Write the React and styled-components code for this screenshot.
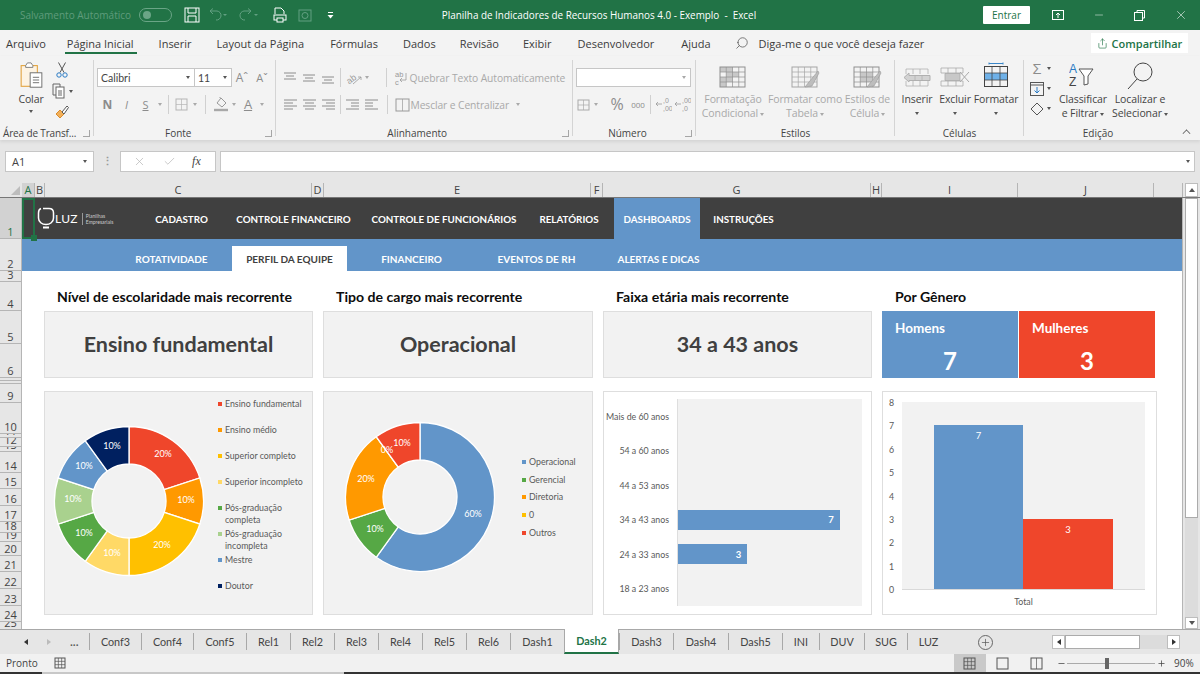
import React from 'react';
import styled, { createGlobalStyle } from 'styled-components';
import { Search, Minus, X, Check, Share, Plus } from 'lucide-react';

const BLUE = '#6295c9';
const RED = '#ef462b';
const UI = '"Open Sans", "Noto Sans", sans-serif';
const SHEET = 'Lato, "Open Sans", sans-serif';

const GlobalStyle = createGlobalStyle`
	html, body {
		margin: 0;
		padding: 0;
		width: 1200px;
		height: 674px;
		overflow: hidden;
		background: #e6e6e6;
		font-family: ${UI};
	}
	* { box-sizing: border-box; }
`;

const Window = styled.div`
	width: 1200px;
	height: 674px;
	display: flex;
	flex-direction: column;
	overflow: hidden;
`;

/* ---------- title bar ---------- */
const TitleBar = styled.div`
	height: 30px;
	background: #217346;
	display: flex;
	align-items: center;
	color: #fff;
	padding-left: 20px;
	flex: none;
	& > * {
		flex: none;
	}
`;
const AutoSave = styled.span`
	width: 119px;
	font-size: 10px;
	color: #5f9c7c;
	white-space: nowrap;
`;
const Toggle = styled.span`
	width: 33px;
	height: 14px;
	border: 1px solid #6aa586;
	border-radius: 7px;
	display: flex;
	align-items: center;
	padding-left: 3px;
	&::before {
		content: '';
		width: 8px;
		height: 8px;
		border-radius: 50%;
		background: #6aa586;
	}
`;
const QuickBar = styled.div`
	width: 269px;
	display: flex;
	align-items: center;
	padding-left: 8px;
`;
const QuickSlot = styled.span`
	width: ${(p) => p.$w}px;
	display: flex;
	justify-content: center;
	flex: none;
`;
const DocTitle = styled.div`
	width: 316px;
	text-align: center;
	font-size: 9.9px;
	white-space: pre;
`;
const WinControls = styled.div`
	display: flex;
	align-items: center;
	margin-left: 226px;
`;
const Entrar = styled.span`
	width: 47px;
	height: 18px;
	background: #fff;
	color: #217346;
	font-size: 10px;
	border-radius: 1px;
	display: flex;
	align-items: center;
	justify-content: center;
	margin-right: 7px;
`;
const WinBtn = styled.span`
	width: 41px;
	display: flex;
	justify-content: center;
`;

/* ---------- menu tabs ---------- */
const MenuBar = styled.div`
	height: 26px;
	background: #f3f3f3;
	display: flex;
	align-items: center;
	padding-left: 6px;
	flex: none;
	position: relative;
`;
const MenuItem = styled.span`
	margin-right: ${(p) => p.$gap}px;
	font-size: 11px;
	color: #3b3b3b;
	white-space: nowrap;
	position: relative;
	${(p) =>
		p.$active &&
		`&::after {
			content: '';
			position: absolute;
			left: -2px;
			right: -3px;
			bottom: -3px;
			height: 2px;
			background: #217346;
		}`}
`;
const TellMe = styled.span`
	display: flex;
	align-items: center;
	gap: 10px;
	font-size: 11px;
	color: #3b3b3b;
	margin-left: 24px;
	white-space: nowrap;
`;
const MirrorSearch = styled(Search)`
	transform: scaleX(-1);
`;
const ShareBtn = styled.span`
	position: absolute;
	left: 1091px;
	top: 3px;
	width: 97px;
	height: 20px;
	background: #fff;
	color: #217346;
	font-size: 11px;
	font-weight: 600;
	display: flex;
	align-items: center;
	justify-content: center;
	gap: 4px;
	white-space: nowrap;
`;

/* ---------- ribbon ---------- */
const Ribbon = styled.div`
	height: 84px;
	background: #f3f3f3;
	display: flex;
	flex: none;
	box-shadow: 0 2px 3px #d4d4d4;
	position: relative;
`;
const Group = styled.div`
	width: ${(p) => p.$w}px;
	height: 84px;
	display: flex;
	flex-direction: column;
	flex: none;
	position: relative;
	&::after {
		content: '';
		position: absolute;
		right: 0;
		top: 4px;
		bottom: 4px;
		width: 1px;
		background: ${(p) => (p.$end ? 'transparent' : '#d4d4d4')};
	}
`;
const GroupBody = styled.div`
	height: 68px;
	display: flex;
	flex: none;
	padding-left: ${(p) => p.$pl || 0}px;
`;
const GroupLabel = styled.div`
	height: 14px;
	margin-top: 2px;
	font-size: 10px;
	line-height: 14px;
	flex: none;
	color: #444;
	text-align: ${(p) => (p.$left ? 'left' : 'center')};
	padding-left: ${(p) => p.$pl || 0}px;
	padding-right: ${(p) => p.$pr || 0}px;
	letter-spacing: ${(p) => (p.$left ? '-0.15px' : '0')};
	white-space: nowrap;
`;
const Launcher = styled.span`
	position: absolute;
	right: 4px;
	bottom: 3px;
	width: 7px;
	height: 7px;
	border-right: 1px solid #a6a6a6;
	border-bottom: 1px solid #a6a6a6;
`;
const BigBtn = styled.div`
	width: ${(p) => p.$w}px;
	display: flex;
	flex-direction: column;
	align-items: center;
	padding-top: ${(p) => p.$top ?? 10}px;
	flex: none;
`;
const BigLabel = styled.div`
	margin-top: ${(p) => p.$mt ?? 4}px;
	font-size: 10.5px;
	line-height: 14px;
	text-align: center;
	white-space: pre;
	letter-spacing: -0.1px;
	color: ${(p) => (p.$off ? '#a9a9a9' : '#444')};
`;
const Caret = styled.span`
	display: inline-block;
	width: 0;
	height: 0;
	flex: none;
	border-left: 2.5px solid transparent;
	border-right: 2.5px solid transparent;
	border-top: 3px solid ${(p) => (p.$off ? '#a9a9a9' : '#555')};
	margin-left: ${(p) => p.$ml || 0}px;
	margin-top: ${(p) => p.$mt || 0}px;
	vertical-align: middle;
`;
const SmallCol = styled.div`
	width: ${(p) => p.$w}px;
	display: flex;
	flex-direction: column;
	padding-top: ${(p) => p.$top}px;
	padding-left: ${(p) => p.$pl || 0}px;
	margin-left: ${(p) => p.$ml || 0}px;
	gap: ${(p) => p.$gap}px;
	flex: none;
	align-items: ${(p) => p.$align || 'center'};
`;
const ToolRow = styled.div`
	display: flex;
	align-items: center;
	height: ${(p) => p.$h || 19}px;
	flex: none;
`;
const RowStack = styled.div`
	display: flex;
	flex-direction: column;
	gap: 8px;
	padding-top: 12px;
`;
const SelectBox = styled.div`
	width: ${(p) => p.$w}px;
	height: 19px;
	background: #fff;
	border: 1px solid #c6c6c6;
	margin-left: -1px;
	font-size: 10.5px;
	color: #444;
	display: flex;
	align-items: center;
	justify-content: ${(p) => (p.$end ? 'flex-end' : 'space-between')};
	padding: 0 4px 0 3px;
	font-family: ${SHEET};
`;
const Glyph = styled.span`
	width: ${(p) => p.$w}px;
	text-align: center;
	font-size: ${(p) => p.$size || 11}px;
	font-weight: ${(p) => p.$weight || 400};
	font-style: ${(p) => (p.$italic ? 'italic' : 'normal')};
	text-decoration: ${(p) => (p.$under ? 'underline' : 'none')};
	color: ${(p) => p.$c || '#8c8c8c'};
	margin-left: ${(p) => p.$ml || 0}px;
	flex: none;
	font-family: ${UI};
	line-height: 19px;
`;
const Sep = styled.span`
	width: 1px;
	height: 19px;
	background: #d0d0d0;
	margin-left: ${(p) => p.$l}px;
	margin-right: ${(p) => p.$r}px;
	flex: none;
`;
const Spacer = styled.span`
	width: ${(p) => p.$w}px;
	flex: none;
`;
const OffText = styled.span`
	font-size: 10.3px;
	color: #a9a9a9;
	white-space: nowrap;
	letter-spacing: -0.1px;
	margin-left: ${(p) => p.$ml || 0}px;
`;
const CollapseBtn = styled.span`
	position: absolute;
	left: 1183px;
	top: 74px;
	width: 7px;
	height: 7px;
	border-left: 1.5px solid #555;
	border-top: 1.5px solid #555;
	transform: rotate(45deg) scale(0.8);
`;

/* ---------- formula bar ---------- */
const FormulaBar = styled.div`
	height: 21px;
	margin-top: 11px;
	display: flex;
	flex: none;
	padding-left: 5px;
	padding-right: 5px;
`;
const NameBox = styled.div`
	width: 89px;
	background: #fff;
	border: 1px solid #c6c6c6;
	font-size: 11px;
	color: #444;
	display: flex;
	align-items: center;
	justify-content: space-between;
	padding: 0 6px;
`;
const Dots = styled.span`
	width: 26px;
	text-align: center;
	color: #9a9a9a;
	font-size: 11px;
	font-weight: 700;
	line-height: 19px;
`;
const FxBox = styled.div`
	width: 96px;
	background: #fff;
	border: 1px solid #c6c6c6;
	display: flex;
	align-items: center;
	justify-content: space-around;
	padding: 0 6px 0 4px;
	margin-right: 4px;
	color: #b5b5b5;
`;
const Fx = styled.span`
	font-family: 'Liberation Serif', serif;
	font-style: italic;
	font-size: 12px;
	color: #444;
`;
const FormulaInput = styled.div`
	flex: 1;
	background: #fff;
	border: 1px solid #c6c6c6;
	display: flex;
	align-items: center;
	justify-content: flex-end;
	padding-right: 4px;
`;

/* ---------- columns + sheet ---------- */
const ColumnBar = styled.div`
	height: 14px;
	margin-top: 11px;
	display: flex;
	flex: none;
`;
const Corner = styled.div`
	width: 22px;
	display: flex;
	justify-content: flex-end;
	align-items: flex-end;
	padding: 0 2px 2px 0;
	&::after {
		content: '';
		border-left: 9px solid transparent;
		border-bottom: 9px solid #bdbdbd;
	}
`;
const ColHead = styled.div`
	width: ${(p) => p.$w}px;
	flex: none;
	font-size: 11px;
	line-height: 14px;
	text-align: center;
	color: ${(p) => (p.$sel ? '#217346' : '#444')};
	background: ${(p) => (p.$sel ? '#d2d2d2' : 'transparent')};
	border-right: 1px solid #b5b5b5;
`;
const ScrollBtn = styled.div`
	width: 13px;
	height: ${(p) => p.$h}px;
	margin-left: ${(p) => p.$ml || 0}px;
	margin-top: ${(p) => p.$mt || 0}px;
	background: #fff;
	border: 1px solid #bdbdbd;
	display: flex;
	align-items: center;
	justify-content: center;
	flex: none;
`;
const VArrow = styled.span`
	width: 0;
	height: 0;
	border-left: 3.5px solid transparent;
	border-right: 3.5px solid transparent;
	${(p) => (p.$down ? 'border-top' : 'border-bottom')}: 4px solid #555;
`;
const SheetArea = styled.div`
	height: 432px;
	display: flex;
	flex: none;
	border-top: 1px solid #777;
	position: relative;
`;
const RowBar = styled.div`
	width: 22px;
	flex: none;
	display: flex;
	flex-direction: column;
	border-right: 1px solid #b5b5b5;
	overflow: hidden;
`;
const RowHead = styled.div`
	height: ${(p) => p.$h}px;
	flex: none;
	overflow: hidden;
	border-bottom: 1px solid #b5b5b5;
	display: flex;
	align-items: flex-end;
	justify-content: center;
	font-size: 11px;
	line-height: 13px;
	color: ${(p) => (p.$sel ? '#217346' : '#444')};
	background: ${(p) => (p.$sel ? '#d2d2d2' : 'transparent')};
`;
const CellCursor = styled.div`
	position: absolute;
	left: 22px;
	top: 0;
	width: 13px;
	height: 41px;
	border: 2px solid #217346;
	&::after {
		content: '';
		position: absolute;
		right: -4px;
		bottom: -4px;
		width: 6px;
		height: 6px;
		background: #217346;
	}
`;
const Sheet = styled.div`
	width: 1160px;
	flex: none;
	background: #fff;
	display: flex;
	flex-direction: column;
	font-family: ${SHEET};
`;

/* ---------- dashboard nav ---------- */
const MainNav = styled.div`
	height: 41px;
	background: #404040;
	display: flex;
	align-items: stretch;
	padding-left: 15px;
	flex: none;
`;
const Logo = styled.div`
	display: flex;
	align-items: center;
	width: 103px;
	color: #fff;
`;
const LogoWord = styled.span`
	font-size: 12px;
	margin: 0 4px 0 0;
	letter-spacing: 0.3px;
`;
const LogoSub = styled.span`
	border-left: 1px solid #999;
	padding-left: 3px;
	font-size: 5px;
	line-height: 6px;
	color: #ccc;
`;
const NavItem = styled.div`
	display: flex;
	align-items: center;
	justify-content: center;
	width: ${(p) => p.$w}px;
	color: #fff;
	font-size: 9.8px;
	font-weight: 700;
	white-space: nowrap;
	background: ${(p) => (p.$active ? BLUE : 'transparent')};
`;
const SubNav = styled.div`
	height: 32px;
	background: ${BLUE};
	display: flex;
	align-items: flex-end;
	padding-left: 89px;
	flex: none;
`;
const SubItem = styled.div`
	height: 25px;
	width: ${(p) => p.$w}px;
	display: flex;
	align-items: center;
	justify-content: center;
	font-size: 10px;
	font-weight: 700;
	white-space: nowrap;
	background: ${(p) => (p.$active ? '#fff' : 'transparent')};
	color: ${(p) => (p.$active ? '#404040' : '#fff')};
`;

/* ---------- dashboard ---------- */
const Board = styled.div`
	display: grid;
	grid-template-columns: 269px 270px 269px 274px;
	grid-template-rows: 28px 67px 224px;
	column-gap: 10px;
	row-gap: 0;
	padding: 12px 0 0 22px;
`;
const Heading = styled.div`
	font-size: 14.1px;
	font-weight: 700;
	color: #0d0d0d;
	padding: 6px 0 0 13px;
	line-height: 16px;
	white-space: nowrap;
`;
const Kpi = styled.div`
	background: #f2f2f2;
	border: 1px solid #dedede;
	display: flex;
	align-items: center;
	justify-content: center;
	padding-bottom: 1px;
	font-size: 21.5px;
	font-weight: 700;
	color: #404040;
`;
const GenderRow = styled.div`
	display: flex;
	gap: 1px;
	width: 273px;
`;
const GenderCard = styled.div`
	flex: 1;
	background: ${(p) => p.$bg};
	color: #fff;
	font-weight: 700;
	display: flex;
	flex-direction: column;
	padding: 9px 0 0 13px;
`;
const GenderLabel = styled.div`
	font-size: 13.5px;
	line-height: 16px;
`;
const GenderValue = styled.div`
	font-size: 24px;
	line-height: 28px;
	text-align: center;
	margin: 11px 13px 0 0;
`;
const Card = styled.div`
	margin-top: 13px;
	height: 224px;
	width: ${(p) => (p.$w ? `${p.$w}px` : 'auto')};
	border: 1px solid #dedede;
	background: ${(p) => (p.$white ? '#fff' : '#f2f2f2')};
	display: flex;
	font-size: 8.8px;
	color: #595959;
`;
const DonutSvg = styled.svg`
	flex: none;
	display: block;
`;
const Legend = styled.div`
	display: grid;
	grid-auto-rows: ${(p) => p.$row}px;
	margin-top: ${(p) => p.$top}px;
	align-items: center;
`;
const LegendItem = styled.div`
	display: flex;
	align-items: ${(p) => (p.$wrap ? 'flex-start' : 'center')};
	align-self: ${(p) => (p.$wrap ? 'start' : 'center')};
	margin-top: ${(p) => (p.$wrap ? 7 : 0)}px;
	gap: 3px;
	line-height: 12px;
	font-size: 8.8px;
	white-space: pre;
`;
const Swatch = styled.span`
	width: 4px;
	height: 4px;
	flex: none;
	background: ${(p) => p.$c};
	margin-top: ${(p) => (p.$wrap ? 4 : 0)}px;
`;
const AgeLabels = styled.div`
	width: 65px;
	margin-top: 7px;
	display: grid;
	grid-template-rows: repeat(6, 34.5px);
	align-items: center;
	text-align: right;
	white-space: nowrap;
	flex: none;
`;
const AgePlot = styled.div`
	width: 185px;
	height: 207px;
	margin: 7px 0 0 8px;
	background: #f2f2f2;
	border-left: 1px solid #dedede;
	display: grid;
	grid-template-rows: repeat(6, 34.5px);
	align-items: center;
`;
const AgeBar = styled.div`
	width: ${(p) => p.$w}px;
	height: 20px;
	background: ${BLUE};
	color: #fff;
	font-size: 9.5px;
	font-weight: 700;
	display: flex;
	align-items: center;
	justify-content: flex-end;
	padding-right: 6px;
`;
const AxisCol = styled.div`
	width: 19px;
	height: 199px;
	margin-top: 5px;
	display: flex;
	flex-direction: column;
	justify-content: space-between;
	align-items: flex-end;
	padding-right: 8px;
	line-height: 12px;
	flex: none;
`;
const GenderPlotWrap = styled.div`
	width: 243px;
	display: flex;
	flex-direction: column;
	flex: none;
`;
const GenderPlot = styled.div`
	height: 188px;
	margin-top: 10px;
	background: #f2f2f2;
	border-bottom: 1px solid #d9d9d9;
	display: flex;
	align-items: flex-end;
	padding-left: 32px;
`;
const GenderBar = styled.div`
	width: ${(p) => p.$w}px;
	height: ${(p) => p.$h}px;
	background: ${(p) => p.$bg};
	color: #fff;
	text-align: center;
	font-size: 9.5px;
	padding-top: 5px;
	line-height: 12px;
`;
const AxisName = styled.div`
	text-align: center;
	margin-top: 6px;
	line-height: 12px;
`;

/* ---------- scrollbars + tabs + status ---------- */
const VScroll = styled.div`
	width: 18px;
	flex: none;
	border-left: 1px solid #b5b5b5;
	padding-left: 2px;
	display: flex;
	flex-direction: column;
`;
const VTrack = styled.div`
	width: 13px;
	height: 419px;
	background: #dcdcdc;
	flex: none;
`;
const VThumb = styled.div`
	height: 320px;
	background: #fff;
	border: 1px solid #ababab;
`;
const TabBar = styled.div`
	height: 25px;
	background: #e6e6e6;
	display: flex;
	align-items: center;
	border-top: 1px solid #a8a8a8;
	flex: none;
	position: relative;
`;
const TabNav = styled.div`
	width: 89px;
	display: flex;
	align-items: center;
	flex: none;
	height: 100%;
	padding-left: 24px;
	gap: 19px;
	color: #555;
	font-size: 10px;
`;
const Arrow = styled.span`
	width: 0;
	height: 0;
	border-top: 3.5px solid transparent;
	border-bottom: 3.5px solid transparent;
	${(p) => (p.$right ? 'border-left' : 'border-right')}: 4px solid ${(p) => p.$c || '#333'};
`;
const Tab = styled.div`
	width: ${(p) => p.$w}px;
	height: ${(p) => (p.$active ? '25px' : '17px')};
	margin-top: ${(p) => (p.$active ? '-1px' : '-2px')};
	flex: none;
	display: flex;
	align-items: center;
	justify-content: center;
	font-size: 10.8px;
	font-family: ${SHEET};
	color: ${(p) => (p.$active ? '#217346' : '#444')};
	font-weight: ${(p) => (p.$active ? 700 : 400)};
	background: ${(p) => (p.$active ? '#fff' : 'transparent')};
	border-left: 1px solid #a8a8a8;
	&:last-of-type {
		border-right: 1px solid #a8a8a8;
	}
	${(p) => p.$active && 'border-bottom: 2px solid #217346; border-right: 1px solid #a8a8a8;'}
`;
const AddSheet = styled.span`
	margin-left: 29px;
	width: 15px;
	height: 15px;
	border: 1px solid #666;
	border-radius: 50%;
	display: flex;
	align-items: center;
	justify-content: center;
	color: #555;
	flex: none;
`;
const HScroll = styled.div`
	margin-left: 59px;
	width: 128px;
	height: 14px;
	display: flex;
	background: #dcdcdc;
	flex: none;
`;
const HArrow = styled.span`
	width: 13px;
	background: #fff;
	border: 1px solid #bdbdbd;
	display: flex;
	align-items: center;
	justify-content: center;
	flex: none;
`;
const HThumb = styled.span`
	width: 75px;
	background: #fff;
	border: 1px solid #ababab;
	margin-right: 27px;
	flex: none;
`;
const StatusBar = styled.div`
	height: 18px;
	background: #f1f1f1;
	display: flex;
	align-items: center;
	font-size: 10px;
	color: #444;
	padding-left: 6px;
	flex: none;
`;
const StatusLabel = styled.span`
	width: ${(p) => p.$w}px;
	margin-left: ${(p) => p.$ml || 0}px;
	flex: none;
`;
const ViewBtn = styled.span`
	width: ${(p) => p.$w}px;
	height: 18px;
	display: flex;
	align-items: center;
	justify-content: center;
	background: ${(p) => (p.$active ? '#c9c9c9' : 'transparent')};
	flex: none;
`;
const ZoomMinus = styled(Minus)`
	margin-left: 4px;
	flex: none;
`;
const ZoomTrack = styled.div`
	width: 88px;
	height: 1px;
	background: #aaa;
	margin: 0 2px 0 1px;
	position: relative;
	flex: none;
	&::after {
		content: '';
		position: absolute;
		left: 38px;
		top: -5px;
		width: 4px;
		height: 11px;
		background: #666;
	}
`;
const BottomEdge = styled.div`
	height: 2px;
	flex: none;
	background: linear-gradient(to right, #333 42px, #c8c8c8 42px, #c8c8c8 344px, #333 344px);
`;

/* ---------- small drawn icons ---------- */
const Lines = ({ rows, color = '#8c8c8c' }) => (
	<svg width="15" height="13" viewBox="0 0 15 13">
		{rows.map((r, i) => (
			<line key={i} x1={r[0]} x2={r[1]} y1={r[2]} y2={r[2]} stroke={color} strokeWidth="1" />
		))}
	</svg>
);

const TableIcon = ({ w = 25, h = 20, fill = [], fillColor = '#c8c8c8', stroke = '#8f8f8f', brush, cols = 4, rows = 4 }) => (
	<svg width={w + 4} height={h + 2} viewBox={`0 0 ${w + 4} ${h + 2}`}>
		{fill.map(([c, r], i) => (
			<rect key={i} x={1 + (c * w) / cols} y={1 + (r * h) / rows} width={w / cols} height={h / rows} fill={fillColor} />
		))}
		<rect x="1" y="1" width={w} height={h} fill="none" stroke={stroke} />
		{Array.from({ length: cols - 1 }, (_, i) => (
			<line key={i} x1={1 + ((i + 1) * w) / cols} x2={1 + ((i + 1) * w) / cols} y1="1" y2={h + 1} stroke={stroke} strokeWidth="0.7" />
		))}
		{Array.from({ length: rows - 1 }, (_, i) => (
			<line key={i} y1={1 + ((i + 1) * h) / rows} y2={1 + ((i + 1) * h) / rows} x1="1" x2={w + 1} stroke={stroke} strokeWidth="0.7" />
		))}
		{brush && <path d={`M${w + 2} 5 L${w - 7} ${h - 4} L${w - 11} ${h + 1} L${w - 4} ${h} L${w + 3} 7Z`} fill="#bdbdbd" stroke="#999" strokeWidth="0.6" />}
	</svg>
);

const InsertIcon = () => (
	<svg width="28" height="22" viewBox="0 0 28 22" fill="none" stroke="#b0b0b0">
		<path d="M3 3h22v5M3 3v5M3 15v5h22v-5M10 3v5M17 3v5M10 15v5M17 15v5" strokeWidth="0.8" />
		<path d="M1 11.5l5-4.5v2.5h21v5H6v1.5z" fill="#d2d2d2" />
		<path d="M12 9.5v5M19 9.5v5" strokeWidth="0.8" />
	</svg>
);

const DeleteIcon = () => (
	<svg width="30" height="22" viewBox="0 0 30 22" fill="none" stroke="#a9a9a9">
		<path d="M1 2h22v5H1zM1 15h22v5H1zM8 2v5M16 2v5M8 15v5M16 15v5" strokeWidth="0.8" />
		<path d="M5 7.5h15v7H5z" fill="#c8c8c8" strokeWidth="0.8" />
		<path d="M20 6l9 10M29 6l-9 10" />
	</svg>
);

const FormatIcon = () => (
	<svg width="26" height="26" viewBox="0 0 26 26" fill="none" stroke="#444">
		<path d="M6 1.5h14M6 0.5v2M20 0.5v2" stroke="#3a86c8" />
		<rect x="1.5" y="11" width="23" height="7" fill="#6fb1e8" stroke="none" />
		<rect x="1.5" y="4.5" width="23" height="20" />
		<path d="M1.5 11h23M1.5 18h23M9 4.5v20M17 4.5v20" strokeWidth="0.8" />
	</svg>
);

const SortIcon = () => (
	<svg width="28" height="27" viewBox="0 0 28 27" fill="none">
		<text x="0" y="11" fontSize="12" fill="#2a7bc5" fontFamily="Liberation Sans">A</text>
		<text x="0" y="24" fontSize="12" fill="#444" fontFamily="Liberation Sans">Z</text>
		<path d="M10 7h14l-5 7v8l-4 1v-9z" stroke="#555" fill="#fff" />
	</svg>
);

const ScissorsIcon = () => (
	<svg width="12" height="16" viewBox="0 0 12 16" fill="none" stroke="#555">
		<path d="M2.5 0.5L8 10.5M9.5 0.5L4 10.5" />
		<circle cx="3" cy="13" r="2.2" stroke="#2a7bc5" />
		<circle cx="9" cy="13" r="2.2" stroke="#2a7bc5" />
	</svg>
);

const BrushIcon = () => (
	<svg width="15" height="15" viewBox="0 0 15 15" fill="none">
		<path d="M1 10l4-4 4 4-4 4z" fill="#f2b05a" stroke="#d98b2b" />
		<path d="M7 8l5-6 1.5 1.5L9 10z" fill="#fff" stroke="#555" />
	</svg>
);

const BucketIcon = () => (
	<svg width="15" height="15" viewBox="0 0 15 15" fill="none" stroke="#999">
		<path d="M7 1l5 5-4 4-5-4zM6 1V0" />
		<path d="M0 13h14" strokeWidth="2.4" stroke="#a8a8a8" />
	</svg>
);

const DecimalIcon = ({ top, bottom }) => (
	<svg width="17" height="15" viewBox="0 0 17 15">
		<text x="8" y="6" fontSize="7" fill="#999" fontFamily="Liberation Sans">{top}</text>
		<text x="8" y="14" fontSize="7" fill="#999" fontFamily="Liberation Sans">{bottom}</text>
		<path d="M1 7h6M1 7l2-2M1 7l2 2" stroke="#999" strokeWidth="0.8" fill="none" />
	</svg>
);

const PasteIcon = () => (
	<svg width="23" height="27" viewBox="0 0 25 30">
		<rect x="1" y="4" width="18" height="23" fill="#fdf3e3" stroke="#e2a33f" strokeWidth="1.2" />
		<path d="M6 4 L8 1 H12 L14 4 V6 H6Z" fill="#fff" stroke="#777" />
		<rect x="11" y="12" width="13" height="16" fill="#fff" stroke="#666" />
		<path d="M14 17h7M14 20h7M14 23h7" stroke="#666" />
	</svg>
);

const CopyIcon = () => (
	<svg width="14" height="16" viewBox="0 0 14 16">
		<path d="M1 1h7v3M1 1v11h3" fill="none" stroke="#666" />
		<rect x="4" y="4" width="8" height="11" fill="#fff" stroke="#666" />
		<path d="M6 8h4M6 10h4M6 12h4" stroke="#666" />
	</svg>
);

const SaveIcon = () => (
	<svg width="16" height="16" viewBox="0 0 16 16" fill="none" stroke="#fff">
		<rect x="1" y="1" width="14" height="14" />
		<path d="M4 1v5h8V1M4 15V9h8v6" />
	</svg>
);

const UndoIcon = () => (
	<svg width="20" height="14" viewBox="0 0 20 14" fill="none" stroke="#62a081">
		<path d="M8 12 A4.5 4.5 0 0 0 9 3 H2 M2 3 L5 0.5 M2 3 L5 6" />
		<path d="M15 6h4l-2 2z" fill="#62a081" stroke="none" />
	</svg>
);

const RedoIcon = () => (
	<svg width="20" height="14" viewBox="0 0 20 14" fill="none" stroke="#62a081">
		<path d="M6 12 A4.5 4.5 0 0 1 5 3 H12 M12 3 L9 0.5 M12 3 L9 6" />
		<path d="M15 6h4l-2 2z" fill="#62a081" stroke="none" />
	</svg>
);

const PrintIcon = () => (
	<svg width="14" height="16" viewBox="0 0 14 16" fill="none" stroke="#fff">
		<path d="M2 7V1h6l3 3v3" />
		<rect x="1" y="8" width="12" height="5" />
		<rect x="4" y="11" width="6" height="4" fill="#217346" />
	</svg>
);

const CameraIcon = () => (
	<svg width="14" height="13" viewBox="0 0 14 13" fill="none" stroke="#62a081">
		<rect x="1" y="1" width="12" height="11" />
		<circle cx="7" cy="6.5" r="3" />
	</svg>
);

const CustomizeIcon = () => (
	<svg width="7" height="7" viewBox="0 0 7 7" fill="#fff">
		<rect x="1" y="0" width="5" height="1" />
		<path d="M0.5 3h6L3.5 6.5z" />
	</svg>
);

const LuzBulb = () => (
	<svg width="18" height="23" viewBox="0 0 18 23" fill="none" stroke="#fff" strokeWidth="1.5">
		<path d="M6 1.5 H12 C15 1.5 16.5 3.5 16.5 6 V11 C16.5 15 13 17.5 9 17.5 C5 17.5 1.5 15 1.5 11 V6 C1.5 3.5 2.5 2 4 1.5" />
		<path d="M6 20.5 H12" strokeWidth="2" />
	</svg>
);

/* ---------- donut ---------- */
const point = (cx, cy, r, turn) => {
	const a = turn * 2 * Math.PI - Math.PI / 2;
	return [cx + r * Math.cos(a), cy + r * Math.sin(a)];
};

const slicePath = (cx, cy, R, r, t0, t1) => {
	const large = t1 - t0 > 0.5 ? 1 : 0;
	const [a, b] = point(cx, cy, R, t0);
	const [c, d] = point(cx, cy, R, t1);
	const [e, f] = point(cx, cy, r, t1);
	const [g, h] = point(cx, cy, r, t0);
	return `M${a} ${b}A${R} ${R} 0 ${large} 1 ${c} ${d}L${e} ${f}A${r} ${r} 0 ${large} 0 ${g} ${h}Z`;
};

const Donut = ({ width, height, cx, cy, data, labels }) => {
	let acc = 0;
	return (
		<DonutSvg width={width} height={height}>
			{data.map((d, i) => {
				const t0 = acc;
				acc += d.v;
				return <path key={i} d={slicePath(cx, cy, 74.5, 37, t0, acc)} fill={d.c} stroke="#fff" strokeWidth="1.3" />;
			})}
			{labels.map((l, i) => (
				<text key={i} x={l[0]} y={l[1]} fill="#fff" fontSize="9" textAnchor="middle" dominantBaseline="middle">
					{l[2]}
				</text>
			))}
		</DonutSvg>
	);
};

/* ---------- data ---------- */
const MENU = [
	['Arquivo', 21],
	['Página Inicial', 25, true],
	['Inserir', 25],
	['Layout da Página', 26],
	['Fórmulas', 25],
	['Dados', 24],
	['Revisão', 24],
	['Exibir', 26],
	['Desenvolvedor', 27],
	['Ajuda', 0],
];

const COLS = [
	['A', 13, true],
	['B', 10],
	['C', 267],
	['D', 12],
	['E', 267],
	['F', 12],
	['G', 268],
	['H', 11],
	['I', 136],
	['J', 136],
	['', 29],
];

const ROWS = [
	['1', 41, true],
	['2', 32],
	['3', 11],
	['4', 29],
	['5', 33],
	['6', 34],
	['7', 3],
	['8', 3],
	['9', 19],
	['10', 31],
	['11', 4],
	['12', 9],
	['13', 5],
	['14', 21],
	['15', 16],
	['16', 17],
	['17', 16],
	['18', 11],
	['19', 9],
	['20', 14],
	['21', 16],
	['22', 17],
	['23', 17],
	['24', 16],
	['25', 8],
];

const NAV = [
	['CADASTRO', 83],
	['CONTROLE FINANCEIRO', 141],
	['CONTROLE DE FUNCIONÁRIOS', 160],
	['RELATÓRIOS', 90],
	['DASHBOARDS', 86, true],
	['INSTRUÇÕES', 87],
];

const SUBNAV = [
	['ROTATIVIDADE', 121],
	['PERFIL DA EQUIPE', 115, true],
	['FINANCEIRO', 129],
	['EVENTOS DE RH', 121],
	['ALERTAS E DICAS', 123],
];

const EDU = [
	{ v: 0.2, c: RED, n: 'Ensino fundamental' },
	{ v: 0.1, c: '#ff9900', n: 'Ensino médio' },
	{ v: 0.2, c: '#ffc000', n: 'Superior completo' },
	{ v: 0.1, c: '#ffd966', n: 'Superior incompleto' },
	{ v: 0.1, c: '#56a845', n: 'Pós-graduação\ncompleta', wrap: true },
	{ v: 0.1, c: '#a9d18e', n: 'Pós-graduação\nincompleta', wrap: true },
	{ v: 0.1, c: BLUE, n: 'Mestre' },
	{ v: 0.1, c: '#002060', n: 'Doutor' },
];

const JOB = [
	{ v: 0.6, c: BLUE, n: 'Operacional' },
	{ v: 0.1, c: '#56a845', n: 'Gerencial' },
	{ v: 0.2, c: '#ff9900', n: 'Diretoria' },
	{ v: 0, c: '#ffc000', n: '0' },
	{ v: 0.1, c: RED, n: 'Outros' },
];

const AGES = [
	['Mais de 60 anos', 0],
	['54 a 60 anos', 0],
	['44 a 53 anos', 0],
	['34 a 43 anos', 7],
	['24 a 33 anos', 3],
	['18 a 23 anos', 0],
];

const TABS = [
	['Conf3', 52],
	['Conf4', 52],
	['Conf5', 53],
	['Rel1', 44],
	['Rel2', 44],
	['Rel3', 44],
	['Rel4', 44],
	['Rel5', 44],
	['Rel6', 44],
	['Dash1', 54],
	['Dash2', 55, true],
	['Dash3', 54],
	['Dash4', 55],
	['Dash5', 54],
	['INI', 37],
	['DUV', 45],
	['SUG', 43],
	['LUZ', 42],
];

const App = () => (
	<Window>
		<GlobalStyle />
		<TitleBar>
			<AutoSave>Salvamento Automático</AutoSave>
			<Toggle />
			<QuickBar>
				<QuickSlot $w={24}><SaveIcon /></QuickSlot>
				<QuickSlot $w={28}><UndoIcon /></QuickSlot>
				<QuickSlot $w={34}><RedoIcon /></QuickSlot>
				<QuickSlot $w={28}><PrintIcon /></QuickSlot>
				<QuickSlot $w={22}><CameraIcon /></QuickSlot>
				<QuickSlot $w={28}><CustomizeIcon /></QuickSlot>
			</QuickBar>
			<DocTitle>Planilha de Indicadores de Recursos Humanos 4.0 - Exemplo  -  Excel</DocTitle>
			<WinControls>
				<Entrar>Entrar</Entrar>
				<WinBtn>
					<svg width="12" height="10" viewBox="0 0 12 10" fill="none" stroke="#fff">
						<rect x="0.5" y="0.5" width="11" height="9" />
						<path d="M6 8V3M4 5l2-2 2 2" />
					</svg>
				</WinBtn>
				<WinBtn>
					<Minus size={12} color="#fff" strokeWidth={1} />
				</WinBtn>
				<WinBtn>
					<svg width="11" height="11" viewBox="0 0 11 11" fill="none" stroke="#fff">
						<rect x="0.5" y="2.5" width="8" height="8" />
						<path d="M3 2.5V0.5H10.5V8H8.5" />
					</svg>
				</WinBtn>
				<WinBtn>
					<X size={14} color="#fff" strokeWidth={1} />
				</WinBtn>
			</WinControls>
		</TitleBar>

		<MenuBar>
			{MENU.map(([label, gap, active]) => (
				<MenuItem key={label} $gap={gap} $active={active}>
					{label}
				</MenuItem>
			))}
			<TellMe>
				<MirrorSearch size={14} color="#555" strokeWidth={1.3} />
				Diga-me o que você deseja fazer
			</TellMe>
			<ShareBtn>
				<Share size={11} strokeWidth={1.4} />
				Compartilhar
			</ShareBtn>
		</MenuBar>

		<Ribbon>
			<Group $w={94}>
				<GroupBody $pl={6}>
					<BigBtn $w={50} $top={6}>
						<PasteIcon />
						<BigLabel $mt={3}>Colar</BigLabel>
						<Caret $mt={4} />
					</BigBtn>
					<SmallCol $w={26} $ml={-7} $top={6} $gap={5}>
						<ScissorsIcon />
						<ToolRow $h={16}>
							<CopyIcon />
							<Caret $ml={3} />
						</ToolRow>
						<BrushIcon />
					</SmallCol>
				</GroupBody>
				<GroupLabel $left $pl={3}>
					Área de Transf...
				</GroupLabel>
				<Launcher />
			</Group>

			<Group $w={181.5}>
				<GroupBody $pl={4}>
					<RowStack>
						<ToolRow>
							<SelectBox $w={98}>
								Calibri
								<Caret />
							</SelectBox>
							<SelectBox $w={38}>
								11
								<Caret />
							</SelectBox>
							<Glyph $w={20} $size={12}>Aˆ</Glyph>
							<Glyph $w={20} $size={11}>Aˇ</Glyph>
						</ToolRow>
						<ToolRow>
							<Glyph $w={19} $weight={700} $size={12}>N</Glyph>
							<Glyph $w={19} $italic>I</Glyph>
							<Glyph $w={19} $under>S</Glyph>
							<Caret $off $ml={3} />
							<Sep $l={6} $r={6} />
							<TableIcon w={11} h={11} cols={2} rows={2} stroke="#b5b5b5" />
							<Caret $off $ml={3} />
							<Sep $l={8} $r={8} />
							<BucketIcon />
							<Caret $off $ml={3} />
							<Glyph $w={24} $under $size={13}>A</Glyph>
							<Caret $off />
						</ToolRow>
					</RowStack>
				</GroupBody>
				<GroupLabel $pr={13}>Fonte</GroupLabel>
				<Launcher />
			</Group>

			<Group $w={297.5}>
				<GroupBody $pl={7}>
					<RowStack>
						<ToolRow>
							<Lines rows={[[1, 13, 2], [3, 11, 5], [1, 13, 8]]} />
							<Spacer $w={4} />
							<Lines rows={[[1, 13, 4], [3, 11, 7], [1, 13, 10]]} />
							<Spacer $w={4} />
							<Lines rows={[[1, 13, 6], [3, 11, 9], [1, 13, 12]]} />
							<Sep $l={4} $r={4} />
							<svg width="18" height="15" viewBox="0 0 18 15">
								<text x="1" y="11" fontSize="9" fill="#999" fontFamily="Liberation Sans" transform="rotate(-35 8 8)">ab</text>
								<path d="M8 14L16 7M13 7h3v3" stroke="#999" fill="none" strokeWidth="0.8" />
							</svg>
							<Caret $off $ml={2} />
							<Sep $l={17} $r={7} />
							<svg width="14" height="16" viewBox="0 0 14 16">
								<text x="1" y="7" fontSize="7.5" fill="#999" fontFamily="Liberation Sans">ab</text>
								<text x="1" y="14.5" fontSize="7.5" fill="#999" fontFamily="Liberation Sans">c</text>
								<path d="M12 3v7H6M8 8l-2 2 2 2" stroke="#999" fill="none" strokeWidth="0.8" />
							</svg>
							<OffText $ml={2}>Quebrar Texto Automaticamente</OffText>
						</ToolRow>
						<ToolRow>
							<Lines rows={[[1, 14, 2], [1, 10, 5], [1, 14, 8], [1, 10, 11]]} />
							<Spacer $w={4} />
							<Lines rows={[[1, 14, 2], [3, 12, 5], [1, 14, 8], [3, 12, 11]]} />
							<Spacer $w={4} />
							<Lines rows={[[1, 14, 2], [5, 14, 5], [1, 14, 8], [5, 14, 11]]} />
							<Sep $l={4} $r={4} />
							<Lines rows={[[1, 14, 2], [6, 14, 5], [6, 14, 8], [1, 14, 11]]} />
							<Spacer $w={4} />
							<Lines rows={[[1, 14, 2], [1, 9, 5], [1, 9, 8], [1, 14, 11]]} />
							<Sep $l={8} $r={7} />
							<TableIcon w={13} h={12} cols={2} rows={1} stroke="#999" />
							<OffText $ml={-1}>Mesclar e Centralizar</OffText>
							<Caret $off $ml={7} />
						</ToolRow>
					</RowStack>
				</GroupBody>
				<GroupLabel $pr={14}>Alinhamento</GroupLabel>
				<Launcher />
			</Group>

			<Group $w={123}>
				<GroupBody $pl={4}>
					<RowStack>
						<ToolRow>
							<SelectBox $w={115} $end>
								<Caret $off />
							</SelectBox>
						</ToolRow>
						<ToolRow>
							<TableIcon w={11} h={10} cols={2} rows={2} stroke="#aaa" />
							<Caret $off $ml={2} />
							<Glyph $w={22} $size={16} $ml={8}>%</Glyph>
							<Glyph $w={20} $size={8}>000</Glyph>
							<Sep $l={2} $r={4} />
							<DecimalIcon top=",0" bottom=",00" />
							<Spacer $w={2} />
							<DecimalIcon top=",00" bottom=",0" />
						</ToolRow>
					</RowStack>
				</GroupBody>
				<GroupLabel $pr={14}>Número</GroupLabel>
				<Launcher />
			</Group>

			<Group $w={199}>
				<GroupBody $pl={1}>
					<BigBtn $w={72}>
						<TableIcon fill={[[0, 0], [1, 0], [1, 1], [2, 1], [0, 2], [1, 2], [0, 3]]} />
						<BigLabel $off>
							{'Formatação\nCondicional'}
							<Caret $off $ml={2} />
						</BigLabel>
					</BigBtn>
					<BigBtn $w={72}>
						<TableIcon brush stroke="#a5a5a5" />
						<BigLabel $off>
							{'Formatar como\nTabela'}
							<Caret $off $ml={2} />
						</BigLabel>
					</BigBtn>
					<BigBtn $w={53}>
						<TableIcon brush fill={[[1, 1], [2, 1], [1, 2], [2, 2]]} />
						<BigLabel $off>
							{'Estilos de\nCélula'}
							<Caret $off $ml={2} />
						</BigLabel>
					</BigBtn>
				</GroupBody>
				<GroupLabel>Estilos</GroupLabel>
			</Group>

			<Group $w={129}>
				<GroupBody $pl={2}>
					<BigBtn $w={40}>
						<InsertIcon />
						<BigLabel>Inserir</BigLabel>
						<Caret $mt={6} />
					</BigBtn>
					<BigBtn $w={36}>
						<DeleteIcon />
						<BigLabel>Excluir</BigLabel>
						<Caret $mt={6} />
					</BigBtn>
					<BigBtn $w={46} $top={6}>
						<FormatIcon />
						<BigLabel>Formatar</BigLabel>
						<Caret $mt={6} />
					</BigBtn>
				</GroupBody>
				<GroupLabel>Células</GroupLabel>
			</Group>

			<Group $w={148} $end>
				<GroupBody>
					<SmallCol $w={30} $top={3} $gap={1} $pl={6} $align="flex-start">
						<ToolRow>
							<Glyph $w={14} $size={15}>Σ</Glyph>
							<Caret $ml={3} />
						</ToolRow>
						<ToolRow>
							<svg width="14" height="14" viewBox="0 0 14 14" fill="none">
								<rect x="0.5" y="0.5" width="13" height="13" stroke="#555" />
								<path d="M1 3h12" stroke="#555" />
								<path d="M7 5v6M4.5 8.5L7 11l2.5-2.5" stroke="#2a7bc5" />
							</svg>
							<Caret $ml={3} />
						</ToolRow>
						<ToolRow>
							<svg width="14" height="14" viewBox="0 0 14 14" fill="none" stroke="#555">
								<path d="M7 1l6 6-6 6-6-6z" />
							</svg>
							<Caret $ml={3} />
						</ToolRow>
					</SmallCol>
					<BigBtn $w={58} $top={6}>
						<SortIcon />
						<BigLabel $mt={3}>
							{'Classificar\ne Filtrar'}
							<Caret $ml={2} />
						</BigLabel>
					</BigBtn>
					<BigBtn $w={56} $top={6}>
						<svg width="28" height="28" viewBox="0 0 28 28" fill="none" stroke="#444">
							<circle cx="17" cy="10" r="9" />
							<path d="M11 17L2 27" />
						</svg>
						<BigLabel $mt={2}>
							{'Localizar e\nSelecionar'}
							<Caret $ml={2} />
						</BigLabel>
					</BigBtn>
				</GroupBody>
				<GroupLabel>Edição</GroupLabel>
			</Group>
			<CollapseBtn />
		</Ribbon>

		<FormulaBar>
			<NameBox>
				A1
				<Caret />
			</NameBox>
			<Dots>⋮</Dots>
			<FxBox>
				<X size={13} strokeWidth={1.3} />
				<Check size={13} strokeWidth={1.3} />
				<Fx>fx</Fx>
			</FxBox>
			<FormulaInput>
				<Caret />
			</FormulaInput>
		</FormulaBar>

		<ColumnBar>
			<Corner />
			{COLS.map(([label, w, sel], i) => (
				<ColHead key={i} $w={w} $sel={sel}>
					{label}
				</ColHead>
			))}
			<ScrollBtn $h={14} $ml={2}>
				<VArrow />
			</ScrollBtn>
		</ColumnBar>

		<SheetArea>
			<RowBar>
				{ROWS.map(([label, h, sel]) => (
					<RowHead key={label} $h={h} $sel={sel}>
						{label}
					</RowHead>
				))}
			</RowBar>
			<Sheet>
				<MainNav>
					<Logo>
						<LuzBulb />
						<LogoWord>LUZ</LogoWord>
						<LogoSub>
							Planilhas
							<br />
							Empresariais
						</LogoSub>
					</Logo>
					{NAV.map(([label, w, active]) => (
						<NavItem key={label} $w={w} $active={active}>
							{label}
						</NavItem>
					))}
				</MainNav>
				<SubNav>
					{SUBNAV.map(([label, w, active]) => (
						<SubItem key={label} $w={w} $active={active}>
							{label}
						</SubItem>
					))}
				</SubNav>
				<Board>
					<Heading>Nível de escolaridade mais recorrente</Heading>
					<Heading>Tipo de cargo mais recorrente</Heading>
					<Heading>Faixa etária mais recorrente</Heading>
					<Heading>Por Gênero</Heading>

					<Kpi>Ensino fundamental</Kpi>
					<Kpi>Operacional</Kpi>
					<Kpi>34 a 43 anos</Kpi>
					<GenderRow>
						<GenderCard $bg={BLUE}>
							<GenderLabel>Homens</GenderLabel>
							<GenderValue>7</GenderValue>
						</GenderCard>
						<GenderCard $bg={RED}>
							<GenderLabel>Mulheres</GenderLabel>
							<GenderValue>3</GenderValue>
						</GenderCard>
					</GenderRow>

					<Card>
						<Donut
							width={173}
							height={222}
							cx={84}
							cy={109}
							data={EDU}
							labels={[
								[118, 63, '20%'],
								[141, 109, '10%'],
								[117, 154, '20%'],
								[67, 162, '10%'],
								[39, 142, '10%'],
								[28, 108, '10%'],
								[39, 75, '10%'],
								[67, 55, '10%'],
							]}
						/>
						<Legend $row={26} $top={-1}>
							{EDU.map((d) => (
								<LegendItem key={d.n} $wrap={d.wrap}>
									<Swatch $c={d.c} $wrap={d.wrap} />
									{d.n}
								</LegendItem>
							))}
						</Legend>
					</Card>

					<Card>
						<Donut
							width={198}
							height={222}
							cx={96}
							cy={105}
							data={JOB}
							labels={[
								[149, 123, '60%'],
								[51, 138, '10%'],
								[42, 88, '20%'],
								[63, 59, '0%'],
								[78, 52, '10%'],
							]}
						/>
						<Legend $row={17.7} $top={61}>
							{JOB.map((d) => (
								<LegendItem key={d.n}>
									<Swatch $c={d.c} />
									{d.n}
								</LegendItem>
							))}
						</Legend>
					</Card>

					<Card $white>
						<AgeLabels>
							{AGES.map(([label]) => (
								<div key={label}>{label}</div>
							))}
						</AgeLabels>
						<AgePlot>
							{AGES.map(([label, value]) =>
								value ? (
									<AgeBar key={label} $w={value * 23.1}>
										{value}
									</AgeBar>
								) : (
									<div key={label} />
								)
							)}
						</AgePlot>
					</Card>

					<Card $white $w={275}>
						<AxisCol>
							{[8, 7, 6, 5, 4, 3, 2, 1, 0].map((n) => (
								<div key={n}>{n}</div>
							))}
						</AxisCol>
						<GenderPlotWrap>
							<GenderPlot>
								<GenderBar $w={89} $h={164.5} $bg={BLUE}>7</GenderBar>
								<GenderBar $w={90} $h={70.5} $bg={RED}>3</GenderBar>
							</GenderPlot>
							<AxisName>Total</AxisName>
						</GenderPlotWrap>
					</Card>
				</Board>
			</Sheet>
			<VScroll>
				<VTrack>
					<VThumb />
				</VTrack>
				<ScrollBtn $h={12}>
					<VArrow $down />
				</ScrollBtn>
			</VScroll>
			<CellCursor />
		</SheetArea>

		<TabBar>
			<TabNav>
				<Arrow />
				<Arrow $right $c="#bbb" />
				<strong>...</strong>
			</TabNav>
			{TABS.map(([label, w, active]) => (
				<Tab key={label} $w={w} $active={active}>
					{label}
				</Tab>
			))}
			<AddSheet>
				<Plus size={11} strokeWidth={1.5} />
			</AddSheet>
			<HScroll>
				<HArrow>
					<Arrow />
				</HArrow>
				<HThumb />
				<HArrow>
					<Arrow $right />
				</HArrow>
			</HScroll>
		</TabBar>

		<StatusBar>
			<StatusLabel $w={48}>Pronto</StatusLabel>
			<TableIcon w={10} h={10} cols={3} rows={3} stroke="#555" />
			<Spacer $w={886} />
			<ViewBtn $w={32} $active>
				<TableIcon w={11} h={11} cols={3} rows={3} stroke="#555" />
			</ViewBtn>
			<ViewBtn $w={35}>
				<TableIcon w={11} h={11} cols={1} rows={1} stroke="#555" />
			</ViewBtn>
			<ViewBtn $w={32}>
				<TableIcon w={11} h={11} cols={2} rows={1} stroke="#555" />
			</ViewBtn>
			<ZoomMinus size={9} strokeWidth={2} color="#444" />
			<ZoomTrack />
			<Plus size={9} strokeWidth={2} color="#444" />
			<StatusLabel $w={24} $ml={8}>90%</StatusLabel>
		</StatusBar>
		<BottomEdge />
	</Window>
);

export default App;
